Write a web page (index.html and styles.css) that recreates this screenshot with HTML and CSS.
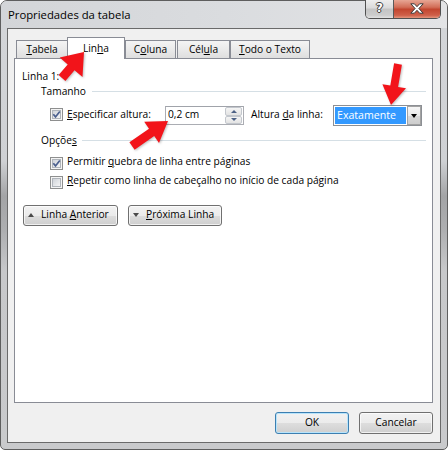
FILE: index.html
```html
<!DOCTYPE html>
<html>
<head>
<meta charset="utf-8">
<link rel="stylesheet" href="styles.css">
</head>
<body>
<svg class="defs" width="0" height="0" aria-hidden="true">
  <defs>
    <linearGradient id="cbg" x1="0" y1="0" x2="1" y2="1">
      <stop offset="0" stop-color="#cdd1d7"/>
      <stop offset="1" stop-color="#f7f7f7"/>
    </linearGradient>
  </defs>
</svg>
<div class="window">
  <div class="titlebar">
    <div class="title">Propriedades da tabela</div>
    <div class="caption">
      <div class="cap-help">?</div>
      <div class="cap-close">
        <svg width="14" height="11" viewBox="0 0 14 11"><path d="M0.8 0.8h3.6l2.6 2.9 2.6-2.9h3.6l-4.3 4.7 4.3 4.7h-3.6l-2.6-2.9-2.6 2.9h-3.6l4.3-4.7z" fill="#fff" stroke="#3a3a3a" stroke-width="1"/></svg>
      </div>
    </div>
  </div>
  <div class="client">
    <div class="tabs">
      <div class="tab tab-tabela"><u>T</u>abela</div>
      <div class="tab tab-linha sel">Lin<u>h</u>a</div>
      <div class="tab tab-coluna">C<u>o</u>luna</div>
      <div class="tab tab-celula">Cél<u>u</u>la</div>
      <div class="tab tab-todo"><u>T</u>odo o Texto</div>
    </div>
    <div class="panel">
      <div class="heading">Linha 1:</div>
      <div class="legend"><span>Tamanho</span><span class="rule"></span></div>
      <div class="size-row">
        <svg class="cb" width="13" height="13" viewBox="0 0 13 13"><rect x="0.5" y="0.5" width="12" height="12" fill="#f4f4f4" stroke="#8e8f8f"/><rect x="2.5" y="2.5" width="8" height="8" fill="url(#cbg)" stroke="#b0b5bb"/><path d="M3.3 6.3 L5.5 8.9 L9.8 3.4" fill="none" stroke="#4a5f8e" stroke-width="1.7"/></svg>
        <div class="lbl-spec"><u>E</u>specificar altura:</div>
        <div class="spin-input">
          <span class="val">0,2 cm</span>
          <div class="spin">
            <div class="sb"><span class="tri-s up"></span></div>
            <div class="sb"><span class="tri-s down"></span></div>
          </div>
        </div>
        <div class="lbl-alt">Altura <u>d</u>a linha:</div>
        <div class="select">
          <span class="sel-val">Exatamente</span>
          <div class="dd"><span class="tri-dd"></span></div>
        </div>
      </div>
      <div class="legend opts"><span>Opçõe<u>s</u></span><span class="rule"></span></div>
      <div class="check-row r1">
        <svg class="cb" width="13" height="13" viewBox="0 0 13 13"><rect x="0.5" y="0.5" width="12" height="12" fill="#f4f4f4" stroke="#8e8f8f"/><rect x="2.5" y="2.5" width="8" height="8" fill="url(#cbg)" stroke="#b0b5bb"/><path d="M3.3 6.3 L5.5 8.9 L9.8 3.4" fill="none" stroke="#4a5f8e" stroke-width="1.7"/></svg>
        <span class="ctext">Permitir <u>q</u>uebra de linha entre páginas</span>
      </div>
      <div class="check-row r2">
        <svg class="cb" width="13" height="13" viewBox="0 0 13 13"><rect x="0.5" y="0.5" width="12" height="12" fill="#f4f4f4" stroke="#8e8f8f"/><rect x="2.5" y="2.5" width="8" height="8" fill="url(#cbg)" stroke="#b0b5bb"/></svg>
        <span class="ctext"><u>R</u>epetir como linha de cabeçalho no início de cada página</span>
      </div>
      <div class="nav-row">
        <div class="btn nav prev"><span class="tri up"></span><span>Linha <u>A</u>nterior</span></div>
        <div class="btn nav next"><span class="tri down"></span><span><u>P</u>róxima Linha</span></div>
      </div>
    </div>
    <div class="footer">
      <div class="btn dlg default">OK</div>
      <div class="btn dlg">Cancelar</div>
    </div>
  </div>
  <svg class="annot" width="448" height="450" viewBox="0 0 448 450">
    <g fill="#f2141a">
      <polygon points="84,52 82.5,77 74.5,70.2 65.4,80.9 58.6,75.1 67.7,64.4 59.7,57.6"/>
      <polygon points="168,121 159,143.1 154.2,136.1 134.6,149.7 129.4,142.3 149,128.7 144.2,121.7"/>
      <polygon points="391,105 406,88.3 398.1,87 401.9,64.7 394.1,63.3 390.3,85.6 382.4,84.3"/>
    </g>
  </svg>
</div>
</body>
</html>
```

FILE: styles.css
```css
html, body {
  margin: 0;
  padding: 0;
  background: #ffffff;
}
body {
  font-family: "Open Sans", "Noto Sans", sans-serif;
  font-size: 10.2px;
  line-height: 15px;
  color: #000;
}
.defs { position: absolute; }

.window {
  position: relative;
  width: 448px;
  height: 450px;
  box-sizing: border-box;
  border: 1px solid #5e5e5e;
  border-radius: 7px 7px 5px 5px;
  padding: 0 6px 6px 6px;
  display: flex;
  flex-direction: column;
  background: linear-gradient(180deg, #d4d6d9 0px, #cfd1d4 160px, #a3a4a6 195px, #aeafb1 230px, #c7c8ca 270px, #c9cacc 100%);
}

/* title bar */
.titlebar {
  height: 27px;
  display: flex;
  align-items: flex-start;
  margin: 0 -6px;
  padding: 0 6px;
  border-radius: 6px 6px 0 0;
  background: linear-gradient(90deg, #d3d5d8 0%, #dadcdf 50%, #e3e4e6 100%);
}
.title {
  padding: 6px 0 0 1px;
  font-size: 11.3px;
  line-height: 15px;
  color: #000;
}
.caption {
  margin-left: auto;
  margin-top: -1px;
  height: 19px;
  display: flex;
  border: 1px solid #505050;
  border-top: none;
  border-radius: 0 0 5px 5px;
  overflow: hidden;
  box-sizing: border-box;
}
.cap-help {
  width: 27px;
  height: 18px;
  border-right: 1px solid #5a5a5a;
  background: linear-gradient(180deg, #eeeeee 0%, #dadada 45%, #c4c4c4 50%, #cdcdcd 85%, #e2e2e2 100%);
  color: #fff;
  font-family: "DejaVu Sans", sans-serif;
  font-weight: bold;
  font-size: 12px;
  line-height: 17px;
  text-align: center;
  text-shadow: 1px 0 0 #3a3a3a, -1px 0 0 #3a3a3a, 0 1px 0 #3a3a3a, 0 -1px 0 #3a3a3a;
}
.cap-close {
  width: 46px;
  height: 18px;
  display: flex;
  align-items: center;
  justify-content: center;
  background: linear-gradient(180deg, #e7a694 0%, #d26e58 40%, #c2462f 52%, #cf6049 85%, #e4967e 100%);
}
.cap-close svg { display: block; margin-top: -1px; }

/* client */
.client {
  flex: 1;
  border: 1px solid #6a6a6a;
  background: #f0f0f0;
  display: flex;
  flex-direction: column;
}
.tabs {
  display: flex;
  align-items: flex-end;
  height: 22px;
  margin: 8px 0 0 8px;
  position: relative;
  z-index: 2;
}
.tab {
  box-sizing: border-box;
  height: 18px;
  margin-bottom: 1px;
  border: 1px solid #898c95;
  border-bottom: none;
  background: linear-gradient(180deg, #f4f4f4 0%, #eaeaea 50%, #dedede 100%);
  text-align: center;
  padding-top: 1px;
  line-height: 15px;
}
.tab.sel {
  height: 22px;
  margin-bottom: 0;
  background: #ffffff;
  padding-top: 3px;
}
.tab-tabela { width: 52px; }
.tab-linha { width: 58px; margin-left: -1px; }
.tab-coluna { width: 51px; margin-left: 0; }
.tab-celula { width: 53px; margin-left: 1px; }
.tab-todo { width: 80px; margin-left: 0; }

.panel {
  position: relative;
  z-index: 1;
  box-sizing: border-box;
  width: 419px;
  height: 345px;
  margin: -1px 0 0 6px;
  border: 1px solid #898c95;
  background: #ffffff;
  padding: 10px 6px 0 7px;
}
.heading { height: 15px; }
.legend {
  display: flex;
  align-items: center;
  height: 15px;
  margin-left: 19px;
}
.legend .rule {
  flex: 1;
  height: 1px;
  margin-left: 6px;
  background: #d5dfe5;
}
.legend.opts { margin-top: 7px; }
.legend.opts .rule { margin-left: 5px; }

.size-row {
  display: flex;
  align-items: flex-start;
  height: 21px;
  margin: 6px 0 0 28px;
}
.cb { display: block; flex: none; }
.size-row .cb { margin-top: 3px; }
.lbl-spec {
  margin: 2px 0 0 4px;
  width: 98px;
  white-space: nowrap;
}
.spin-input {
  box-sizing: border-box;
  width: 79px;
  height: 19px;
  margin-top: 1px;
  border: 1px solid #abadb3;
  border-top-color: #a0a3aa;
  background: #fff;
  display: flex;
}
.spin-input .val {
  flex: 1;
  padding-left: 2px;
  line-height: 15px;
}
.spin {
  width: 17px;
  display: flex;
  flex-direction: column;
  margin-right: 1px;
}
.sb {
  flex: 1;
  box-sizing: border-box;
  border: 1px solid #c3c7cd;
  border-radius: 2px;
  background: linear-gradient(180deg, #f5f5f5, #e3e3e3);
  display: flex;
  align-items: center;
  justify-content: center;
}
.tri-s {
  width: 0;
  height: 0;
  border-left: 3px solid transparent;
  border-right: 3px solid transparent;
}
.tri-s.up { border-bottom: 3px solid #4d6185; }
.tri-s.down { border-top: 3px solid #4d6185; }
.lbl-alt {
  margin: 2px 0 0 7px;
  width: 82px;
  white-space: nowrap;
}
.select {
  box-sizing: border-box;
  width: 89px;
  height: 21px;
  border: 1px solid #8c8f94;
  background: #fff;
  display: flex;
  align-items: stretch;
  padding: 1px 0 0 1px;
}
.sel-val {
  width: 72px;
  height: 17px;
  background: #3399ff;
  color: #fff;
  padding-left: 2px;
  box-sizing: border-box;
  line-height: 16px;
  font-size: 10.6px;
}
.dd {
  box-sizing: border-box;
  width: 14px;
  margin: -1px 0 0 1px;
  border: 1px solid #a2a2a2;
  background: linear-gradient(180deg, #f6f6f6 0%, #e9e9e9 50%, #d9d9d9 51%, #cdcdcd 100%);
  display: flex;
  align-items: center;
  justify-content: center;
}
.tri-dd {
  width: 0;
  height: 0;
  border-left: 3.5px solid transparent;
  border-right: 3.5px solid transparent;
  border-top: 4px solid #000;
}

.check-row {
  display: flex;
  align-items: flex-start;
  height: 15px;
  margin-left: 28px;
}
.check-row .cb { margin-top: 3px; }
.check-row .ctext { margin-left: 4px; white-space: nowrap; }
.check-row.r1 { margin-top: 6px; }
.check-row.r2 { margin-top: 4px; }

.nav-row {
  display: flex;
  margin: 17px 0 0 1px;
  gap: 10px;
}
.btn {
  box-sizing: border-box;
  height: 21px;
  border: 1px solid #707070;
  border-radius: 3px;
  background: linear-gradient(180deg, #f2f2f2 0%, #ebebeb 50%, #dddddd 51%, #cfcfcf 100%);
  box-shadow: inset 0 0 0 1px rgba(255,255,255,0.7);
  display: flex;
  align-items: center;
  white-space: nowrap;
}
.btn.nav {
  padding: 0 0 2px 4px;
}
.btn.prev { width: 95px; }
.btn.next { width: 94px; }
.tri {
  width: 0;
  height: 0;
  margin-right: 7px;
  border-left: 3.5px solid transparent;
  border-right: 3.5px solid transparent;
}
.tri.up { border-bottom: 4px solid #4a4a4a; }
.tri.down { border-top: 4px solid #4a4a4a; }

.footer {
  display: flex;
  justify-content: flex-end;
  gap: 10px;
  margin-top: 9px;
  padding-right: 7px;
}
.btn.dlg {
  width: 74px;
  height: 22px;
  justify-content: center;
  padding-bottom: 1px;
}
.btn.default {
  border-color: #3c7fb1;
  box-shadow: inset 0 0 0 1px #b8e4fb;
}

.annot {
  position: absolute;
  left: -1px;
  top: -1px;
  z-index: 10;
  pointer-events: none;
  filter: drop-shadow(1px 1px 1px rgba(0,0,0,0.25));
}
```
